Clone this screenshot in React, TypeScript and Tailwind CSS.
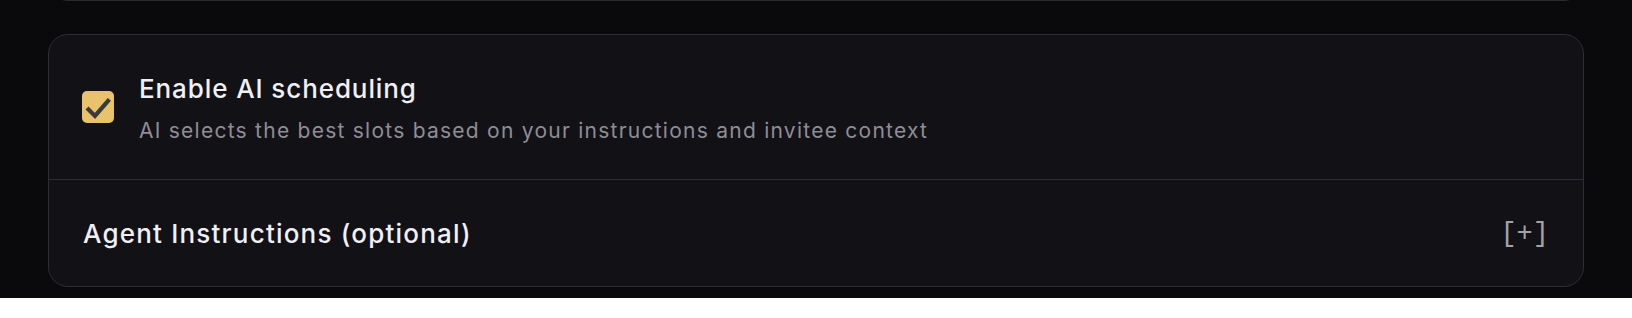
export default function App() {
  return (
    <div className="min-h-screen w-full bg-[#0a0a0c] px-12 font-['Inter',sans-serif]">
      {/* tail of the card above */}
      <div className="-mt-[20px] h-[21px] rounded-b-[20px] border border-[#2c2b31] bg-[#121116]" />

      <div className="mt-[33px] rounded-[20px] border border-[#2e2d33] bg-[#121116]">
        <div className="flex h-[145px] items-center gap-[25px] border-b border-[#2e2d33] px-[33px]">
          <div className="flex h-[32px] w-[32px] shrink-0 items-center justify-center rounded-[5px] bg-[#e8c36b]">
            <svg width="32" height="32" viewBox="0 0 32 32" fill="none">
              <path d="M6.5 18.5 L13 25 L26 10" stroke="#3a393c" strokeWidth="4.2" strokeLinecap="square" strokeLinejoin="miter" />
            </svg>
          </div>
          <div className="flex flex-col gap-[13px] pt-[3px]">
            <div className="text-[26px] font-medium leading-[32px] tracking-[0.9px] text-[#f0eff3]">Enable AI scheduling</div>
            <div className="text-[21px] leading-[26px] tracking-[1.25px] text-[#8f8d95]">
              AI selects the best slots based on your instructions and invitee context
            </div>
          </div>
        </div>

        <div className="flex h-[106px] items-center justify-between pl-[34px] pr-[34px] pt-[1px]">
          <div className="text-[26px] font-medium leading-[32px] tracking-[1.2px] text-[#f0eff3]">Agent Instructions (optional)</div>
          <div className="font-['Liberation_Mono',monospace] text-[27px] leading-[32px] text-[#a3a2a8]">[+]</div>
        </div>
      </div>
    </div>
  );
}
